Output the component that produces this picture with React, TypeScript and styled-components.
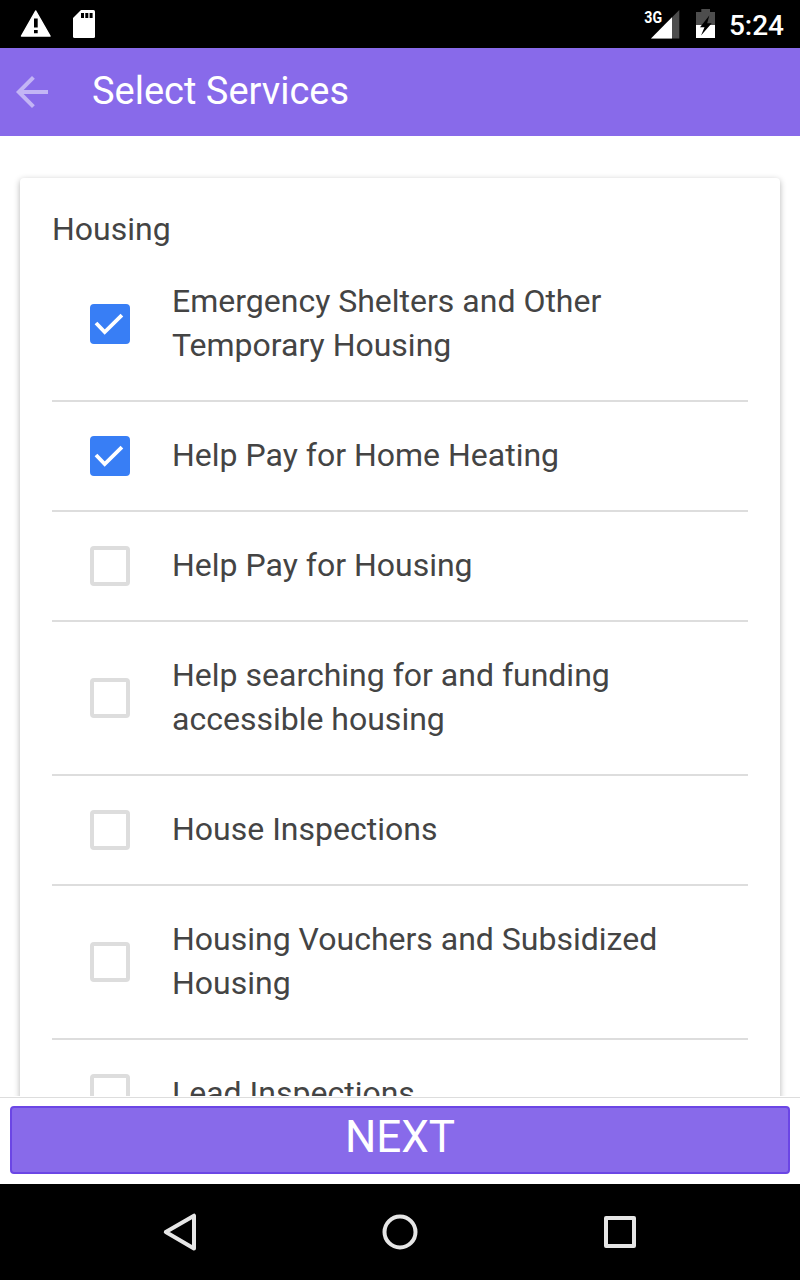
import React from "react";
import styled, { createGlobalStyle } from "styled-components";

const Global = createGlobalStyle`
  * { box-sizing: border-box; }
  body { margin: 0; background: #fff; font-family: Roboto, sans-serif; }
`;
const Screen = styled.div`
  width: 800px; height: 1280px; display: flex; flex-direction: column; overflow: hidden; background: #fff;
`;
const StatusBar = styled.div`
  height: 48px; flex: none; background: #000; color: #fff; display: flex; align-items: center; justify-content: space-between;
  padding: 0 16px 0 20px;
`;
const StatusGroup = styled.div`
  display: flex; align-items: center; height: 48px;
`;
const Clock = styled.span`
  font-size: 28px; font-weight: 500; line-height: 48px; padding-top: 3px; margin-left: 13px;
`;
const Header = styled.header`
  height: 88px; flex: none; background: #886aea; display: flex; align-items: center; padding-left: 16px;
`;
const Title = styled.h1`
  margin: 0 0 2px 44px; color: #fff; font-size: 38px; font-weight: 400; line-height: 86px;
`;
const Content = styled.main`
  height: 960px; flex: none; overflow: hidden; padding: 42px 20px 0;
`;
const Card = styled.section`
  height: 1000px; padding: 29px 32px; border-radius: 4px; box-shadow: 0 2px 6px rgba(0,0,0,.3);
`;
const CardTitle = styled.h2`
  margin: 0 0 1px; color: #444; font-size: 32px; line-height: 44px; font-weight: 400;
`;
const Row = styled.label<{ $first?: boolean }>`
  display: flex; align-items: center; color: #444; font-size: 32px; line-height: 44px;
  border-bottom: 2px solid #ddd; padding: ${(p) => (p.$first ? "28px" : "32px")} 32px 32px 38px;
`;
const RowText = styled.span`
  margin: -1px 0 1px; white-space: pre-line;
`;
const Box = styled.span<{ $on?: boolean }>`
  width: 40px; height: 40px; flex: none; margin-right: 42px; border-radius: 4px;
  border: 4px solid ${(p) => (p.$on ? "#387ef5" : "#ddd")}; background: ${(p) => (p.$on ? "#387ef5" : "#fff")};
`;
const Check = styled.svg`
  display: block; width: 32px; height: 32px; fill: none; stroke: #fff; stroke-width: 3.8px;
`;
const Footer = styled.footer`
  height: 87px; margin-top: 1px; flex: none; border-top: 1px solid #ddd; padding: 8px 10px 10px; background: #fff;
`;
const NextButton = styled.button`
  width: 100%; height: 68px; display: block; padding: 0 0 6px; color: #fff; background: #886aea; border: 2px solid #6b46e5;
  border-radius: 4px; font: 400 44px/56px Roboto, sans-serif;
`;
const NavBar = styled.nav`
  height: 96px; flex: none; background: #000; display: flex; justify-content: center; align-items: center; gap: 172px;
`;
const NavIcon = styled.svg`
  width: 48px; height: 48px; fill: none; stroke: #e6e6e6; stroke-width: 4px; stroke-linejoin: round;
`;

const services: { name: string; on?: boolean }[] = [
  { name: "Emergency Shelters and Other\nTemporary Housing", on: true },
  { name: "Help Pay for Home Heating", on: true },
  { name: "Help Pay for Housing" },
  { name: "Help searching for and funding\naccessible housing" },
  { name: "House Inspections" },
  { name: "Housing Vouchers and Subsidized\nHousing" },
  { name: "Lead Inspections" },
];

export default function App() {
  return (
    <Screen>
      <Global />
      <StatusBar>
        <StatusGroup>
          <svg width="80" height="48">
            <path d="M15.700 11L30 36H1.500Z" fill="#fff" stroke="#fff" strokeWidth="1.500" strokeLinejoin="round" />
            <path d="M14 18.500h3.700v9H14zM14 30h3.700v3.300H14z" />
            <path d="M61 10H73.500q1.500 0 1.500 1.500V36.500q0 1.500-1.500 1.500H54.500q-1.500 0-1.500-1.500V18Z" fill="#fff" />
            <path d="M61 13h3v5h-3zM65.300 13h3v5h-3zM69.600 13h3v5h-3z" />
          </svg>
        </StatusGroup>
        <StatusGroup>
          <svg width="72" height="48">
            <path d="M35.300 10V38.500H7Z" fill="#4d4d4d" />
            <path d="M28 17.300V38.500H7Z" fill="#fff" />
            <text x="0.3" y="22.700" fill="#fff" fontSize="17" fontWeight="700" textLength="17.800" lengthAdjust="spacingAndGlyphs">3G</text>
            <path d="M52 12h5.300V9h8.700v3h5v13H52Z" fill="#4d4d4d" />
            <path d="M52 25h19v13H52Z" fill="#fff" />
            <path d="M65.300 15.500L56 27.200h4.500L57 35.500L67.700 23.300h-4.500Z" />
          </svg>
          <Clock>5:24</Clock>
        </StatusGroup>
      </StatusBar>
      <Header>
        <svg width="32" height="32" viewBox="4 4 16 16" fill="#c3b5f5">
          <path d="M20 11H7.830l5.590-5.590L12 4l-8 8 8 8 1.410-1.410L7.830 13H20v-2z" />
        </svg>
        <Title>Select Services</Title>
      </Header>
      <Content>
        <Card>
          <CardTitle>Housing</CardTitle>
          {services.map((s, i) => (
            <Row key={s.name} $first={i === 0}>
              <Box $on={s.on}>
                {s.on && <Check viewBox="4 4 32 32"><path d="M6 19L14.700 28.100L31.900 11.200" /></Check>}
              </Box>
              <RowText>{s.name}</RowText>
            </Row>
          ))}
        </Card>
      </Content>
      <Footer><NextButton>NEXT</NextButton></Footer>
      <NavBar>
        <NavIcon><path d="M38 7.700V40.500L9.800 24Z" /></NavIcon>
        <NavIcon><circle cx="24" cy="24" r="15.500" /></NavIcon>
        <NavIcon><rect x="10" y="10" width="28" height="28" /></NavIcon>
      </NavBar>
    </Screen>
  );
}
